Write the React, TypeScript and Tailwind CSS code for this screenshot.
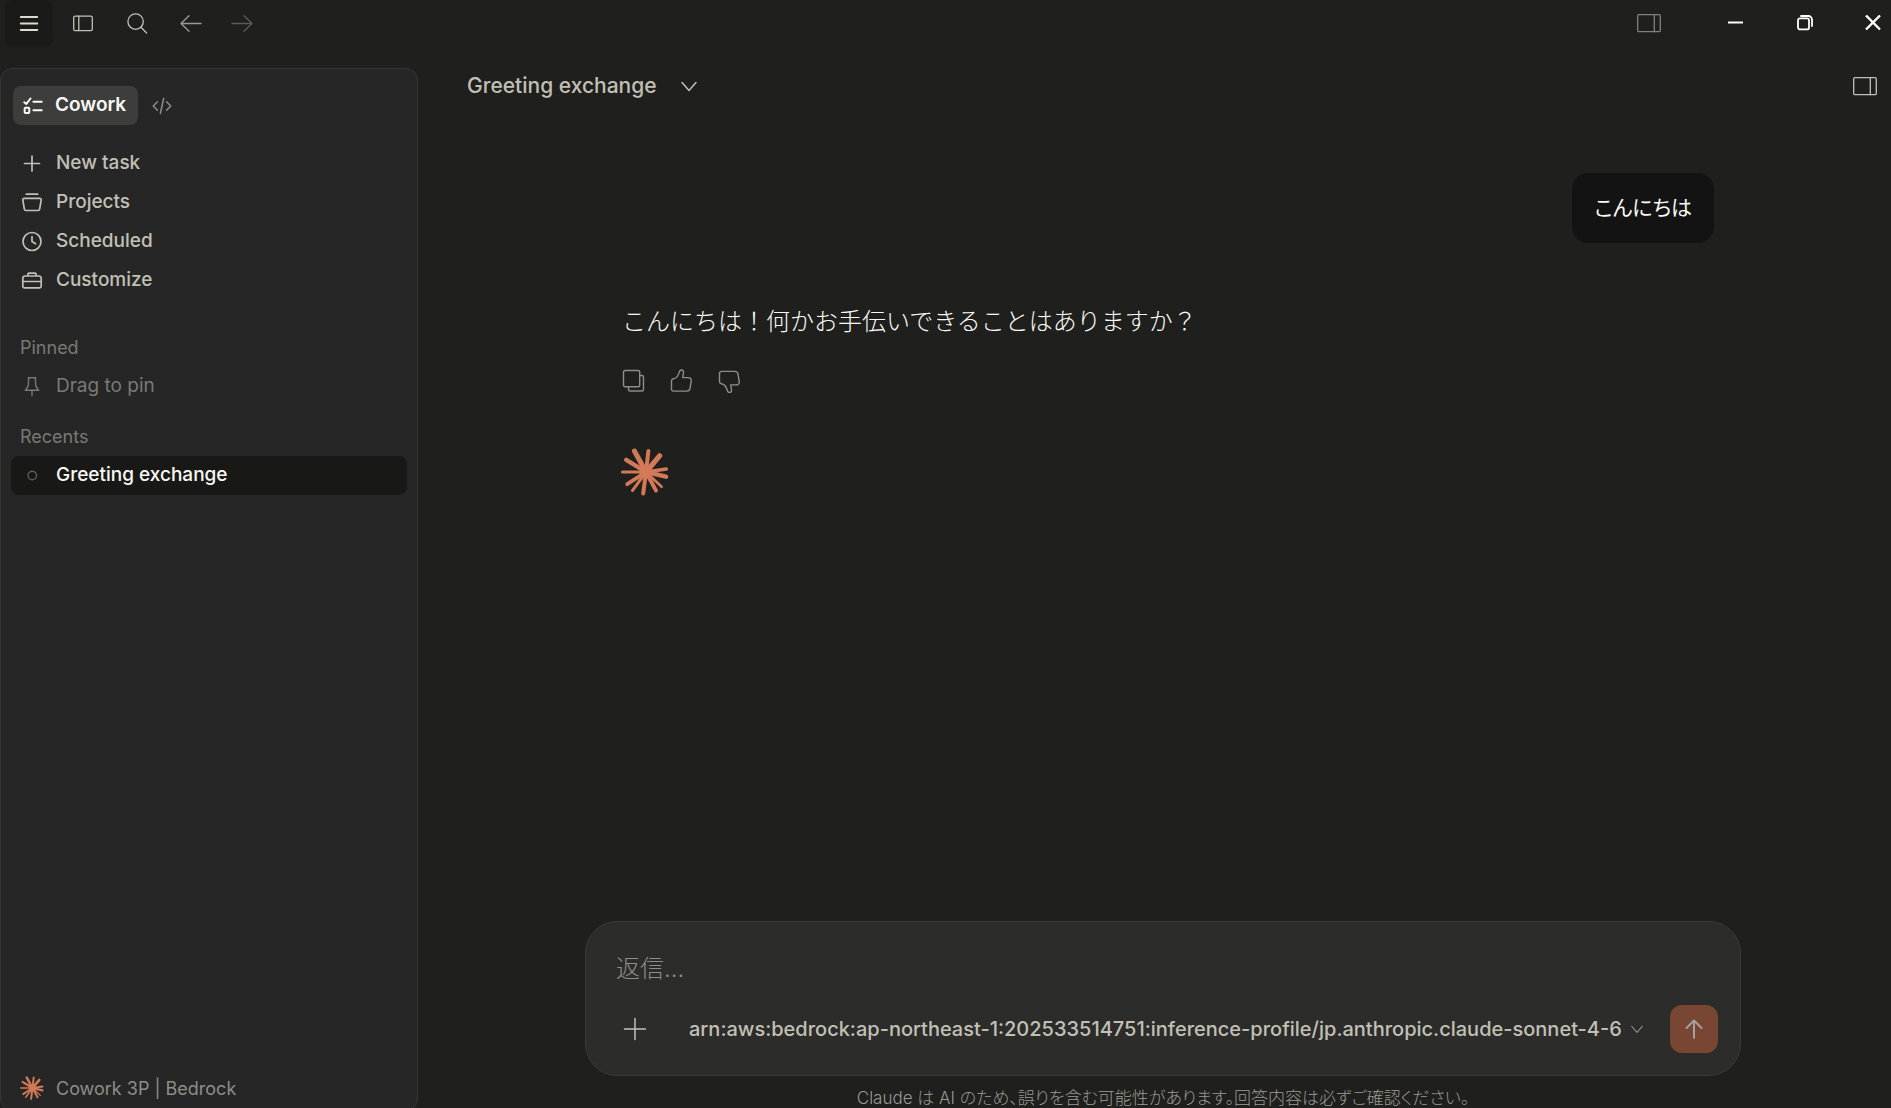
import { useState } from "react";
import type { ReactNode } from "react";

const MODELS = [
  "arn:aws:bedrock:ap-northeast-1:202533514751:inference-profile/jp.anthropic.claude-sonnet-4-6",
];

interface IconProps {
  className?: string;
  strokeWidth?: number;
  children: ReactNode;
}

function Icon({ className = "size-6", strokeWidth = 1.3, children }: IconProps) {
  return (
    <svg
      viewBox="0 0 24 24"
      fill="none"
      stroke="currentColor"
      strokeWidth={strokeWidth}
      strokeLinecap="round"
      strokeLinejoin="round"
      aria-hidden="true"
      className={`shrink-0 ${className}`}
    >
      {children}
    </svg>
  );
}

function PanelRightIcon() {
  return (
    <Icon>
      <rect x="0.7" y="3.7" width="22.6" height="17" rx="1.2" />
      <path d="M17.3 3.7v17" />
    </Icon>
  );
}

function ChevronIcon({ className }: { className?: string }) {
  return (
    <Icon className={className} strokeWidth={1.5}>
      <path d="M5 8.5l7 8 7-8" />
    </Icon>
  );
}

// 中心からの放射線 [x, y, 太さ]
const RAYS = [
  [-11.6, -21, 5],
  [2.4, -21, 4],
  [13.6, -16.2, 5.2],
  [20.3, -3, 3.6],
  [20, 4.7, 4.4],
  [15.6, 14.8, 2.6],
  [10, 18.6, 4],
  [-2.8, 21.6, 4],
  [-13.6, 18.6, 3],
  [-18.8, 12.2, 3.8],
  [-23.4, 0, 3.2],
  [-19.8, -12.2, 4.4],
];

function Spark({ className }: { className: string }) {
  return (
    <svg
      viewBox="-25 -24 48 48"
      aria-hidden="true"
      stroke="#d27a58"
      strokeLinecap="round"
      className={`shrink-0 ${className}`}
    >
      <circle r="6.5" fill="#d27a58" stroke="none" />
      {RAYS.map(([x, y, width]) => (
        <line key={`${x},${y}`} x1="0" y1="0" x2={x} y2={y} strokeWidth={width} />
      ))}
    </svg>
  );
}

function TitleBar() {
  return (
    <header className="flex h-[47px] shrink-0 items-start justify-between">
      <div className="flex gap-[6px] pl-[5px] text-[#c2c0b6]">
        <button
          type="button"
          aria-label="Menu"
          className="flex h-[47px] w-12 items-center justify-center rounded-lg bg-[#1a1a19] text-[#dddbce]"
        >
          <Icon strokeWidth={2}>
            <path d="M3.8 5h16.4M3.8 11.5h16.4M3.8 18h16.4" />
          </Icon>
        </button>
        <button
          type="button"
          aria-label="Sidebar"
          className="flex h-[47px] w-12 items-center justify-center"
        >
          <Icon>
            <rect x="2.7" y="4.2" width="18.6" height="14.4" rx="1.4" />
            <path d="M7.8 4.2v14.4" />
          </Icon>
        </button>
        <button
          type="button"
          aria-label="Search"
          className="flex h-[47px] w-12 items-center justify-center"
        >
          <Icon>
            <circle cx="10.6" cy="9.6" r="7.7" />
            <path d="M16 15.2l5.6 5.8" />
          </Icon>
        </button>
        <button
          type="button"
          aria-label="Back"
          className="flex h-[47px] w-12 items-center justify-center text-[#9c9a92]"
        >
          <Icon>
            <path d="M22 11.5H2M10 3.7L2 11.5l8 7.8" />
          </Icon>
        </button>
        <button
          type="button"
          aria-label="Forward"
          className="flex h-[47px] w-[42px] items-center justify-center text-[#5c5b57]"
        >
          <Icon>
            <path d="M2 11.5h20M14 3.7l8 7.8-8 7.8" />
          </Icon>
        </button>
      </div>

      <div className="flex text-white">
        <button
          type="button"
          aria-label="Panel"
          className="mr-7 flex h-[45px] w-12 items-center justify-center text-[#82817a]"
        >
          <PanelRightIcon />
        </button>
        <button
          type="button"
          aria-label="Minimize"
          className="flex h-[45px] w-[69px] items-center justify-center"
        >
          <svg viewBox="0 0 16 16" className="size-4" aria-hidden="true">
            <path d="M0 6.5h15v2H0z" fill="currentColor" />
          </svg>
        </button>
        <button
          type="button"
          aria-label="Restore"
          className="flex h-[45px] w-[69px] items-center justify-center"
        >
          <svg
            viewBox="0 0 16 16"
            className="size-4"
            fill="none"
            stroke="currentColor"
            strokeWidth="1.8"
            strokeLinecap="round"
            aria-hidden="true"
          >
            <rect x="1" y="3.4" width="11" height="11" rx="2" />
            <path d="M4 1h7.4A3.6 3.6 0 0115 4.6V11" />
          </svg>
        </button>
        <button
          type="button"
          aria-label="Close"
          className="flex h-[45px] w-[52px] items-center justify-center pl-4"
        >
          <svg
            viewBox="0 0 16 16"
            className="size-4"
            stroke="currentColor"
            strokeWidth="2.4"
            aria-hidden="true"
          >
            <path d="M1 0.5l14 14M15 0.5l-14 14" />
          </svg>
        </button>
      </div>
    </header>
  );
}

const NAV_ITEMS = [
  { label: "New task", icon: <path d="M12 4v15M4.500 11.500h15" /> },
  {
    label: "Projects",
    icon: (
      <path d="M6.3 3.2h11.400M4.200 7.300h15.600a1.400 1.400 0 011.400 1.600l-1.500 9a1.900 1.900 0 01-1.900 1.600H6.200a1.900 1.900 0 01-1.900-1.600l-1.500-9a1.400 1.400 0 011.400-1.600z" />
    ),
  },
  {
    label: "Scheduled",
    icon: (
      <>
        <circle cx="12" cy="11.5" r="9" />
        <path d="M12 6.700v4.800l3.600 2.200" />
      </>
    ),
  },
  {
    label: "Customize",
    icon: (
      <path d="M5 7h14a2 2 0 012.200 2v8.300a1.600 1.600 0 01-1.600 1.600H4.400a1.600 1.600 0 01-1.600-1.600V9a2 2 0 012.200-2zM7.800 7V5.500a1.400 1.400 0 011.400-1.400h5.600a1.400 1.400 0 011.400 1.400V7M2.800 12.500h18.400" />
    ),
  },
];

function Sidebar() {
  return (
    <aside className="mt-[21px] mr-[17px] -mb-[3px] flex w-[418px] shrink-0 flex-col rounded-xl border border-[#363635] bg-[#262626] px-[10px] pt-[17px] pb-[5px] text-[19px]">
      <div className="flex items-center px-0.5">
        <button
          type="button"
          className="flex h-[39px] items-center gap-3 rounded-lg bg-[#3d3d3c] pr-3 pl-[10px] font-semibold text-[#faf9f5]"
        >
          <Icon className="size-5" strokeWidth={2.4}>
            <path d="M1.5 7.5l2.5 2 5-6.5M12.5 7h10M12.5 17h10" />
            <rect x="2" y="14" width="5.5" height="6.5" rx="1" />
          </Icon>
          Cowork
        </button>
        <button
          type="button"
          aria-label="Code"
          className="flex h-[39px] w-12 items-center justify-center text-[#8f8d86]"
        >
          <Icon className="size-5" strokeWidth={1.8}>
            <path d="M6.5 7L1.5 12l5 5M17.5 7l5 5-5 5M14 3l-4 18" />
          </Icon>
        </button>
      </div>

      <nav className="mt-[19px] font-medium text-[#c2c0b6]">
        {NAV_ITEMS.map((item) => (
          <button
            key={item.label}
            type="button"
            className="flex h-[39px] w-full items-center gap-3 px-[9px]"
          >
            <Icon strokeWidth={1.7}>{item.icon}</Icon>
            {item.label}
          </button>
        ))}
      </nav>

      <section className="mt-7 text-[#7a7973]">
        <h2 className="flex h-[39px] items-center pl-[9px] text-[18px]">Pinned</h2>
        <div className="flex h-[39px] items-center gap-3 px-[9px]">
          <Icon strokeWidth={1.4}>
            <path d="M8.2 2.8h7.6M8.700 2.800l-.5 8.200-2.900 4.300h13.400l-2.900-4.300-.5-8.200M12 15.300v5.500" />
          </Icon>
          Drag to pin
        </div>
      </section>

      <section className="mt-[11px]">
        <h2 className="flex h-[39px] items-center pl-[9px] text-[18px] text-[#7a7973]">
          Recents
        </h2>
        <button
          type="button"
          className="flex h-[39px] w-full items-center gap-3 rounded-lg bg-[#181817] px-[9px] font-medium text-[#faf9f5]"
        >
          <Icon className="size-6 text-[#5c5b57]" strokeWidth={1.4}>
            <circle cx="12.3" cy="11.5" r="4.3" />
          </Icon>
          Greeting exchange
        </button>
      </section>

      <div className="mt-auto flex h-[34px] items-center gap-3 px-[9px] text-[18px] text-[#8f8d86]">
        <Spark className="size-6" />
        Cowork 3P | Bedrock
      </div>
    </aside>
  );
}

function Messages() {
  return (
    <div className="mx-auto flex w-full max-w-[1156px] flex-1 flex-col pt-12 pr-[27px] pl-[37px]">
      <div className="self-end rounded-2xl bg-[#131313] px-[22px] py-[19px] text-[21px] leading-8 text-[#faf9f5] [font-feature-settings:'palt']">
        こんにちは
      </div>

      <p className="mt-[61px] text-[24px] leading-9 font-light text-[#faf9f5]">
        こんにちは！何かお手伝いできることはありますか？
      </p>

      <div className="mt-[17px] flex text-[#8f8d86]">
        <button
          type="button"
          aria-label="コピー"
          className="-ml-3 flex size-12 items-center justify-center"
        >
          <Icon strokeWidth={1.4}>
            <rect x="1.5" y="1.5" width="16.2" height="16.2" rx="1.5" />
            <path d="M17.7 6.5H20A1.5 1.5 0 0121.5 8v12.5A1.5 1.5 0 0120 22H8a1.5 1.5 0 01-1.5-1.5v-2.8" />
          </Icon>
        </button>
        <button
          type="button"
          aria-label="良い回答"
          className="flex size-12 items-center justify-center"
        >
          <Icon strokeWidth={1.4}>
            <path d="M1.500 12c0-1.300.7-2 1.900-2.200 3-.4 4.700-2.400 5.700-6.200.4-1.700 1.100-2.600 2.300-2.600 1.500 0 2.400 1.200 2.100 2.700l-.8 4.900h5.500c2.100 0 3.300 1.400 3 3.300l-1.100 7.200c-.3 2-1.400 3-3.300 3H3.500c-1.300 0-2-.7-2-2z" />
          </Icon>
        </button>
        <button
          type="button"
          aria-label="良くない回答"
          className="flex size-12 items-center justify-center"
        >
          <Icon strokeWidth={1.4}>
            <path d="M1.500 12.500c0 1.300.7 2 1.900 2.200 3 .4 4.700 2.400 5.700 6.200.4 1.700 1.100 2.600 2.300 2.600 1.500 0 2.400-1.200 2.100-2.700l-.8-4.900h5.500c2.100 0 3.300-1.400 3-3.300l-1.100-7.200c-.3-2-1.400-3-3.300-3H3.500c-1.300 0-2 .7-2 2z" />
          </Icon>
        </button>
      </div>

      <Spark className="mt-[43px] -ml-px size-12" />
    </div>
  );
}

function Composer() {
  const [text, setText] = useState("");
  const [model, setModel] = useState(MODELS[0]);

  return (
    <form
      onSubmit={(e) => e.preventDefault()}
      className="mx-auto w-full max-w-[1156px] rounded-[32px] border border-[#3a3a38] bg-[#2c2c2a] px-[22px] pt-[29px] pb-[22px]"
    >
      <input
        type="text"
        aria-label="返信"
        value={text}
        onChange={(e) => setText(e.target.value)}
        placeholder="返信…"
        className="block h-9 w-full bg-transparent pl-2 text-[24px] font-light text-[#faf9f5] placeholder:text-[#8f8d86] focus:outline-none"
      />
      <div className="mt-[18px] flex items-center pl-[3px]">
        <button
          type="button"
          aria-label="追加"
          className="flex size-12 items-center justify-center text-[#c2c0b6]"
        >
          <Icon strokeWidth={1.5}>
            <path d="M12 1.5v21M1.5 12h21" />
          </Icon>
        </button>
        <div className="relative ml-auto flex items-center">
          <select
            aria-label="モデル"
            value={model}
            onChange={(e) => setModel(e.target.value)}
            className="h-12 appearance-none bg-transparent pr-6 text-[20px] font-medium text-[#c2c0b6] focus:outline-none"
          >
            {MODELS.map((name) => (
              <option key={name} value={name}>
                {name}
              </option>
            ))}
          </select>
          <ChevronIcon className="pointer-events-none absolute right-0 size-[18px] text-[#8f8d86]" />
        </div>
        <button
          type="submit"
          aria-label="送信"
          className="ml-6 flex size-12 shrink-0 items-center justify-center rounded-xl bg-[#784632] text-[#a5a19c]"
        >
          <Icon strokeWidth={2}>
            <path d="M12 21V3.5M4.5 11L12 3.5l7.5 7.5" />
          </Icon>
        </button>
      </div>
    </form>
  );
}

export default function App() {
  return (
    <div className="flex h-screen flex-col overflow-hidden bg-[#1f1f1d] font-['Inter','Noto_Sans_CJK_JP',sans-serif]">
      <TitleBar />
      <div className="flex min-h-0 flex-1">
        <Sidebar />
        <main className="flex min-w-0 flex-1 flex-col">
          <div className="flex h-[78px] shrink-0 items-center justify-between pr-0.5 pl-8 text-[#c2c0b6]">
            <div className="flex items-center gap-5">
              <h1 className="text-[21px] font-medium">Greeting exchange</h1>
              <button type="button" aria-label="タスクメニュー">
                <ChevronIcon className="size-6" />
              </button>
            </div>
            <button
              type="button"
              aria-label="詳細パネル"
              className="flex size-12 items-center justify-center"
            >
              <PanelRightIcon />
            </button>
          </div>
          <Messages />
          <Composer />
          <p className="mt-3 text-center text-[17px] leading-5 font-light whitespace-nowrap text-[#9c9a92] [font-feature-settings:'palt']">
            Claude は AI のため、誤りを含む可能性があります。回答内容は必ずご確認ください。
          </p>
        </main>
      </div>
    </div>
  );
}
